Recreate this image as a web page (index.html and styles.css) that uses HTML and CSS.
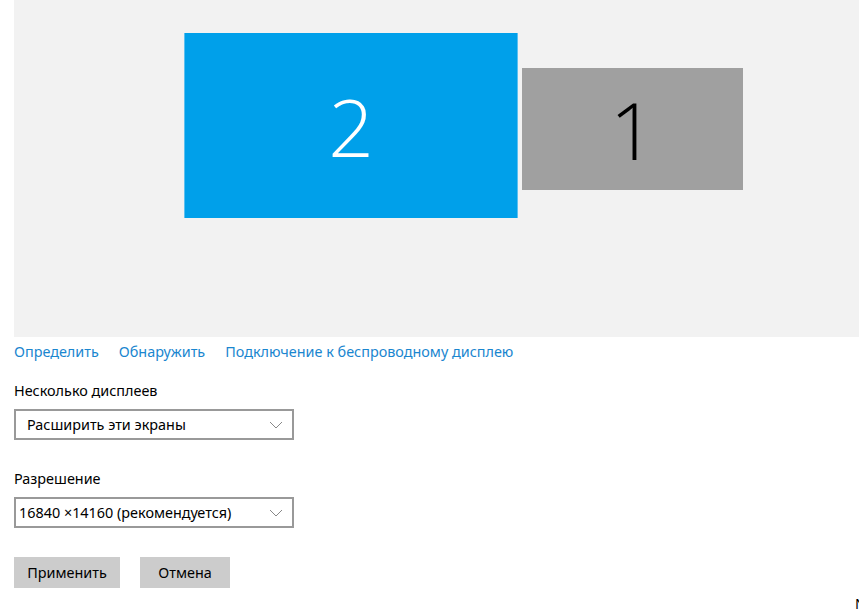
FILE: index.html
```html
<!DOCTYPE html>
<html lang="ru">
<head>
    <meta charset="UTF-8">
    <title>Дисплей</title>
    <link rel="stylesheet" href="styles.css">
</head>
<body>

    <div class="canvas">
        <div class="monitor monitor-main">2</div>
        <div class="monitor monitor-second">1</div>
    </div>

    <div class="links">
        <a href="#">Определить</a>
        <a href="#">Обнаружить</a>
        <a href="#">Подключение к беспроводному дисплею</a>
    </div>

    <div class="field">
        <div class="label">Несколько дисплеев</div>
        <div class="select select-wide">
            <span>Расширить эти экраны</span>
            <svg class="chevron" width="14" height="8" viewBox="0 0 14 8"><path d="M1 1 L7 7 L13 1" fill="none" stroke="#888" stroke-width="1"/></svg>
        </div>
    </div>

    <div class="field">
        <div class="label">Разрешение</div>
        <div class="select select-narrow">
            <span>16840 ×14160 (рекомендуется)</span>
            <svg class="chevron" width="14" height="8" viewBox="0 0 14 8"><path d="M1 1 L7 7 L13 1" fill="none" stroke="#888" stroke-width="1"/></svg>
        </div>
    </div>

    <div class="buttons">
        <button class="btn btn-apply">Применить</button>
        <button class="btn btn-cancel">Отмена</button>
    </div>

    <span class="corner">N</span>

</body>
</html>
```

FILE: styles.css
```css
body {
    margin: 0;
    font-family: "Noto Sans", "Open Sans", sans-serif;
    font-size: 14.4px;
    color: #000;
    background: #fff;
    position: relative;
    height: 611px;
    overflow: hidden;
}
.canvas {
    position: relative;
    margin-left: 14px;
    height: 337px;
    background: #f2f2f2;
}
.monitor {
    position: absolute;
    display: flex;
    justify-content: center;
    align-items: center;
    font-family: "Open Sans", sans-serif;
    font-weight: 300;
    font-size: 80px;
    line-height: 1;
}
.monitor-main {
    left: 170px;
    top: 33px;
    width: 334px;
    height: 185px;
    background: #00a0ea;
    border-left: 1px solid #5cc0f0;
    border-right: 1px solid #5cc0f0;
    box-sizing: border-box;
    color: #fff;
}
.monitor-second {
    left: 508px;
    top: 68px;
    width: 221px;
    height: 122px;
    background: #a0a0a0;
    color: #000;
}
.links {
    display: flex;
    gap: 20px;
    padding: 3px 14px 0;
    height: 24px;
    line-height: 24px;
}
.links a {
    color: #1a86cf;
    text-decoration: none;
}
.field {
    padding: 0 14px;
    margin-top: 15px;
}
.field + .field {
    margin-top: 27px;
}
.label {
    height: 24px;
    line-height: 24px;
    margin-bottom: 6px;
}
.select {
    width: 280px;
    height: 31px;
    box-sizing: border-box;
    border: 2px solid #999;
    display: flex;
    align-items: center;
    justify-content: space-between;
    padding-right: 9px;
}
.select-wide {
    padding-left: 11px;
}
.select-narrow {
    padding-left: 3px;
}
.buttons {
    display: flex;
    gap: 20px;
    padding: 0 14px;
    margin-top: 29px;
}
.btn {
    height: 31px;
    border: none;
    background: #cccccc;
    font-family: inherit;
    font-size: 14.4px;
    color: #000;
    padding: 0;
}
.btn-apply {
    width: 106px;
}
.btn-cancel {
    width: 90px;
}
.corner {
    position: absolute;
    left: 855px;
    top: 594px;
}
```
